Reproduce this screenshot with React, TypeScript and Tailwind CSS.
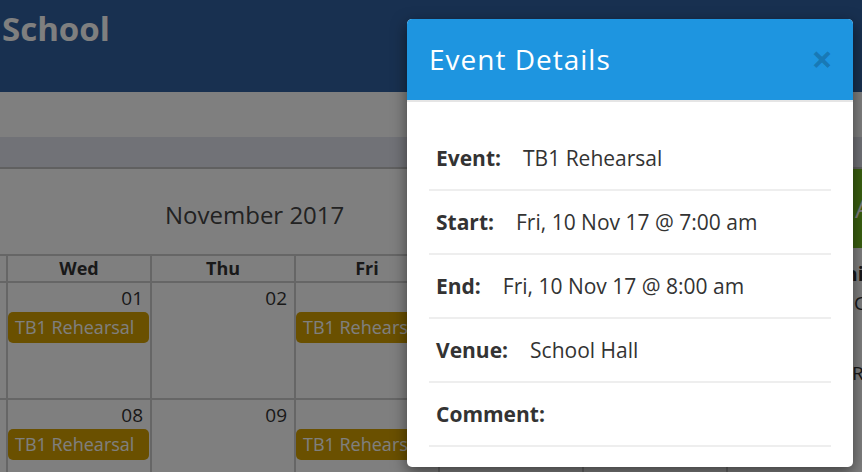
import React from "react";

type Day = { n: string; events: string[] };

const weeks: Day[][] = [
  [
    { n: "30", events: ["TB1 Rehearsal"] },
    { n: "31", events: [] },
    { n: "01", events: ["TB1 Rehearsal"] },
    { n: "02", events: [] },
    { n: "03", events: ["TB1 Rehearsal"] },
    { n: "04", events: [] },
    { n: "05", events: [] },
  ],
  [
    { n: "06", events: ["TB1 Rehearsal"] },
    { n: "07", events: [] },
    { n: "08", events: ["TB1 Rehearsal"] },
    { n: "09", events: [] },
    { n: "10", events: ["TB1 Rehearsal"] },
    { n: "11", events: [] },
    { n: "12", events: [] },
  ],
];

const dayNames = ["Mon", "Tue", "Wed", "Thu", "Fri", "Sat", "Sun"];

const details: [string, string][] = [
  ["Event:", "TB1 Rehearsal"],
  ["Start:", "Fri, 10 Nov 17 @ 7:00 am"],
  ["End:", "Fri, 10 Nov 17 @ 8:00 am"],
  ["Venue:", "School Hall"],
  ["Comment:", ""],
];

export default function App() {
  return (
    <div className="relative w-[862px] h-[472px] overflow-hidden bg-white font-['Open_Sans',sans-serif] text-[#333]">
      {/* Header */}
      <div className="h-[92px] bg-[#3060a0] pl-[2px] pt-[7px]">
        <div className="text-[33px] leading-[44px] font-bold text-white">School</div>
      </div>
      <div className="h-[45px] bg-white" />
      <div className="h-[32px] bg-[#e2e4ee] border-b-2 border-[#c0c0c0]" />

      {/* Main */}
      <div className="flex">
        <div className="w-[833px] shrink-0 overflow-hidden">
          <div className="ml-[-282px] w-[1010px]">
            <div className="pt-[30px] pb-[23px] pl-[447px] text-[24px] leading-[32px] text-[#444]">
              November 2017
            </div>
            <div className="grid grid-cols-[repeat(7,142px)] gap-[2px] bg-[#cccccc] p-[2px]">
              {dayNames.map((d) => (
                <div
                  key={d}
                  className="bg-white h-[25px] text-center text-[18px] leading-[25px] font-bold text-[#333]"
                >
                  {d}
                </div>
              ))}
              {weeks.map((w, wi) =>
                w.map((day, di) => (
                  <div key={`${wi}-${di}`} className="bg-white h-[115px] pt-[2px] flex flex-col">
                    <div className="text-right pr-[7px] text-[19px] leading-[26px] text-[#333]">
                      {day.n}
                    </div>
                    {day.events.map((e, ei) => (
                      <div
                        key={ei}
                        className="mt-[1px] mr-[1px] h-[31px] rounded-[5px] bg-[#d4a000] pl-[7px] text-[18px] leading-[31px] text-white whitespace-nowrap overflow-hidden"
                      >
                        {e}
                      </div>
                    ))}
                  </div>
                ))
              )}
            </div>
          </div>
        </div>

        {/* Sidebar */}
        <div className="w-[240px] shrink-0">
          <div className="h-[79px] bg-[#74c020] pl-[22px] text-[26px] leading-[79px] text-white">
            Add Event
          </div>
          <div className="pt-[12px] text-[20px] leading-[28px] font-bold text-[#333] whitespace-nowrap">
            This Week
          </div>
          <div className="pl-[21px] pt-[2px] text-[19px] leading-[26px] text-[#333] whitespace-nowrap">
            <div>Concert Band</div>
            <div className="pl-[10px] text-[#666]">Thu, 09 Nov</div>
            <div className="mt-[18px] -ml-[2px]">Rehearsal</div>
          </div>
        </div>
      </div>

      {/* Overlay */}
      <div className="absolute inset-0 bg-black/50" />

      {/* Modal */}
      <div className="absolute left-[407px] top-[19px] w-[446px] bg-white rounded-[5px] overflow-hidden shadow-[0_5px_15px_rgba(0,0,0,0.5)]">
        <div className="flex items-center justify-between bg-[#1e95e0] px-[22px] pt-[22px] pb-[23px] border-b-2 border-[#e5e5e5]">
          <div className="text-[28px] leading-[36px] tracking-[1px] text-white">Event Details</div>
          <button className="text-[38px] leading-[36px] font-bold text-black/20 -mt-[2px] -mr-[2px]">×</button>
        </div>
        <div className="px-[22px] pt-[25px] pb-[20px]">
          {details.map(([label, value]) => (
            <div
              key={label}
              className="flex gap-[22px] py-[16px] pl-[7px] border-b-2 border-[#eeeeee] text-[21px] leading-[30px]"
            >
              <span className="font-bold text-[#333]">{label}</span>
              {value && <span className="text-[#333]">{value}</span>}
            </div>
          ))}
        </div>
      </div>
    </div>
  );
}
